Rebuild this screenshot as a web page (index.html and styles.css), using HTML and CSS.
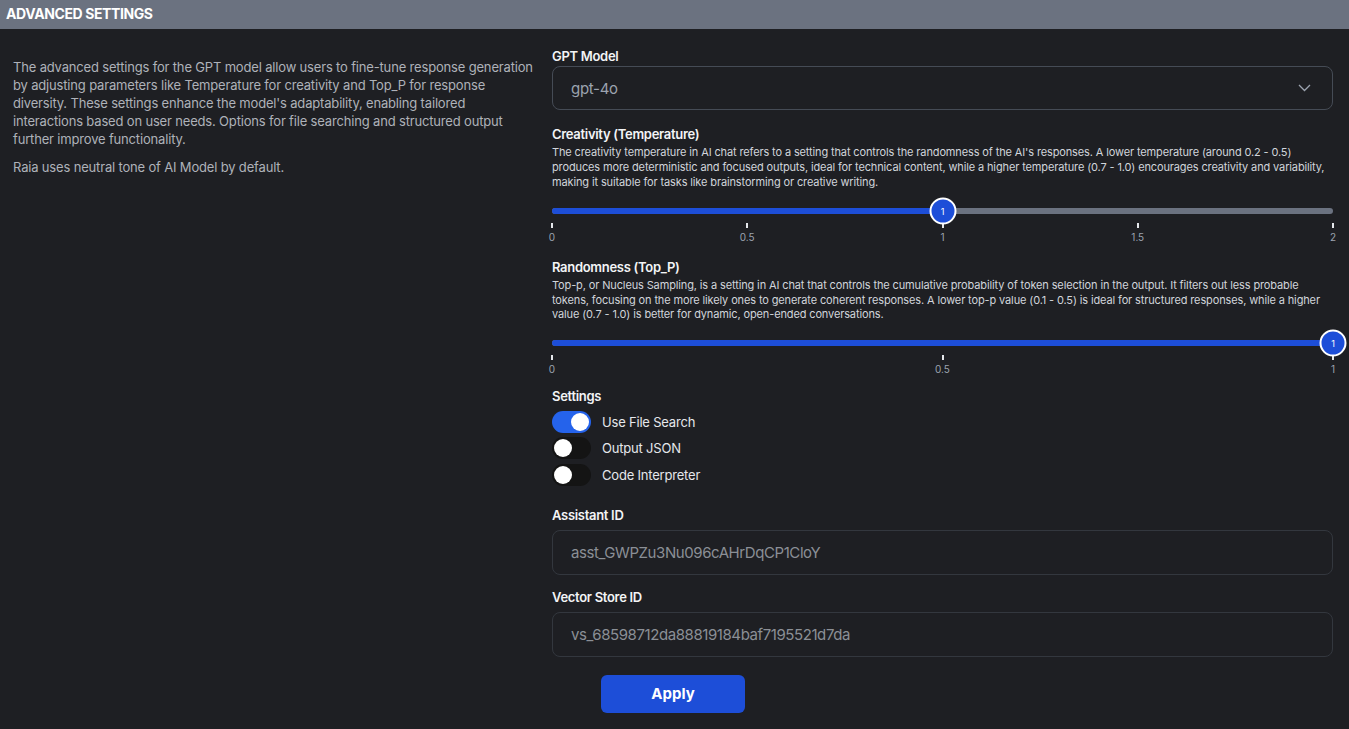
FILE: index.html
```html
<!DOCTYPE html>
<html lang="en">
<head>
<meta charset="utf-8">
<title>Advanced Settings</title>
<link rel="stylesheet" href="styles.css">
</head>
<body>
<header class="bar">ADVANCED SETTINGS</header>
<main class="main">
  <section class="intro">
    <p>The advanced settings for the GPT model allow users to fine-tune response generation by adjusting parameters like Temperature for creativity and Top_P for response diversity. These settings enhance the model's adaptability, enabling tailored interactions based on user needs. Options for file searching and structured output further improve functionality.</p>
    <p>Raia uses neutral tone of AI Model by default.</p>
  </section>
  <section class="form">
    <div class="label">GPT Model</div>
    <div class="select">
      <span>gpt-4o</span>
      <svg class="chev" width="13" height="8" viewBox="0 0 13 8"><path d="M1 1l5.5 5.5L12 1" fill="none" stroke="#9ca3af" stroke-width="1.3"/></svg>
    </div>

    <div class="label mt16">Creativity (Temperature)</div>
    <p class="desc">The creativity temperature in AI chat refers to a setting that controls the randomness of the AI's responses. A lower temperature (around 0.2 - 0.5) produces more deterministic and focused outputs, ideal for technical content, while a higher temperature (0.7 - 1.0) encourages creativity and variability, making it suitable for tasks like brainstorming or creative writing.</p>
    <div class="slider">
      <div class="track">
        <div class="fill" style="width:50%"></div>
        <div class="thumb" style="left:50%">1</div>
      </div>
      <div class="ticks">
        <div class="tick"><i></i><span>0</span></div>
        <div class="tick"><i></i><span>0.5</span></div>
        <div class="tick"><i></i><span>1</span></div>
        <div class="tick"><i></i><span>1.5</span></div>
        <div class="tick"><i></i><span>2</span></div>
      </div>
    </div>

    <div class="label mt16">Randomness (Top_P)</div>
    <p class="desc desc2">Top-p, or Nucleus Sampling, is a setting in AI chat that controls the cumulative probability of token selection in the output. It filters out less probable tokens, focusing on the more likely ones to generate coherent responses. A lower top-p value (0.1 - 0.5) is ideal for structured responses, while a higher value (0.7 - 1.0) is better for dynamic, open-ended conversations.</p>
    <div class="slider">
      <div class="track">
        <div class="fill" style="width:100%"></div>
        <div class="thumb" style="left:100%">1</div>
      </div>
      <div class="ticks">
        <div class="tick"><i></i><span>0</span></div>
        <div class="tick"><i></i><span>0.5</span></div>
        <div class="tick"><i></i><span>1</span></div>
      </div>
    </div>

    <div class="label mt13">Settings</div>
    <div class="toggles">
      <div class="trow"><span class="sw on"><b></b></span><span class="tl">Use File Search</span></div>
      <div class="trow"><span class="sw"><b></b></span><span class="tl">Output JSON</span></div>
      <div class="trow"><span class="sw"><b></b></span><span class="tl">Code Interpreter</span></div>
    </div>

    <div class="label mt21">Assistant ID</div>
    <div class="input">asst_GWPZu3Nu096cAHrDqCP1CloY</div>
    <div class="label mt14">Vector Store ID</div>
    <div class="input">vs_68598712da88819184baf7195521d7da</div>

    <button class="apply">Apply</button>
  </section>
</main>
</body>
</html>
```
FILE: styles.css
```css
* { box-sizing: border-box; }
body {
  margin: 0;
  background: #1e1f23;
  font-family: Inter, "Noto Sans", sans-serif;
  color: #f3f4f6;
  height: 729px;
  overflow: hidden;
}
.bar {
  height: 29px;
  background: #6b7280;
  color: #ffffff;
  font-size: 14px;
  font-weight: 700;
  line-height: 27px;
  padding-left: 6px;
  letter-spacing: -0.4px;
}
.main {
  display: flex;
  gap: 12px;
  padding: 19px 16px 0 13px;
}
.intro {
  width: 527px;
  flex: none;
  padding: 10px 4px 0 0;
}
.intro p {
  margin: 0 0 10px 0;
  font-size: 13px;
  line-height: 18px;
  color: #aeb2b9;
  letter-spacing: -0.17px;
}
.form {
  flex: 1;
  min-width: 0;
}
.label {
  font-size: 13px;
  font-weight: 600;
  line-height: 16px;
  color: #f3f4f6;
  letter-spacing: -0.3px;
}
.mt16 { margin-top: 16px; }
.mt13 { margin-top: 13px; }
.mt21 { margin-top: 21px; }
.mt14 { margin-top: 14px; }
.select {
  margin-top: 2px;
  height: 44px;
  border: 1px solid #454b55;
  border-radius: 8px;
  display: flex;
  align-items: center;
  justify-content: space-between;
  padding: 0 21px 0 18px;
  font-size: 15px;
  color: #9ca3af;
  letter-spacing: -0.3px;
}
.chev { display: block; }
.desc {
  margin: 3px 0 0 0;
  font-size: 11px;
  line-height: 15px;
  color: #d1d5db;
  letter-spacing: -0.13px;
}
.desc2 { line-height: 14.5px; }
.slider { margin-top: 18px; }
.track {
  position: relative;
  height: 6px;
  border-radius: 3px;
  background: #6b7280;
}
.fill {
  height: 100%;
  border-radius: 3px;
  background: #1d4ed8;
}
.thumb {
  position: absolute;
  top: 50%;
  width: 27px;
  height: 27px;
  transform: translate(-50%, -50%);
  border-radius: 50%;
  background: #1d4ed8;
  border: 2px solid #ffffff;
  color: #ffffff;
  font-size: 9px;
  display: flex;
  align-items: center;
  justify-content: center;
  z-index: 2;
}
.ticks {
  display: flex;
  justify-content: space-between;
  margin-top: 9px;
}
.tick {
  width: 0;
  display: flex;
  flex-direction: column;
  align-items: center;
}
.tick i {
  display: block;
  width: 2px;
  height: 5px;
  background: #e5e7eb;
  flex: none;
}
.tick span {
  margin-top: 3px;
  font-size: 10px;
  line-height: 12px;
  color: #9ca3af;
  white-space: nowrap;
}
.toggles {
  margin-top: 7px;
  display: flex;
  flex-direction: column;
  gap: 4.5px;
}
.trow {
  display: flex;
  align-items: center;
  height: 22px;
}
.sw {
  width: 39px;
  height: 22px;
  border-radius: 11px;
  background: #141414;
  display: flex;
  align-items: center;
  padding: 0 2px;
  flex: none;
}
.sw b {
  width: 18px;
  height: 18px;
  border-radius: 50%;
  background: #ffffff;
}
.sw.on {
  background: #2563eb;
  justify-content: flex-end;
}
.tl {
  margin-left: 11px;
  font-size: 13px;
  color: #e5e7eb;
  letter-spacing: -0.2px;
}
.input {
  margin-top: 7px;
  height: 45px;
  border: 1px solid #33373e;
  border-radius: 8px;
  display: flex;
  align-items: center;
  padding-left: 18px;
  font-size: 15px;
  color: #8b8f96;
  letter-spacing: -0.42px;
}
.apply {
  display: block;
  margin: 18px 0 0 49px;
  width: 144px;
  height: 38px;
  border: none;
  border-radius: 6px;
  background: #1d4ed8;
  color: #ffffff;
  font-family: Inter, "Noto Sans", sans-serif;
  font-size: 15px;
  font-weight: 700;
}
```
